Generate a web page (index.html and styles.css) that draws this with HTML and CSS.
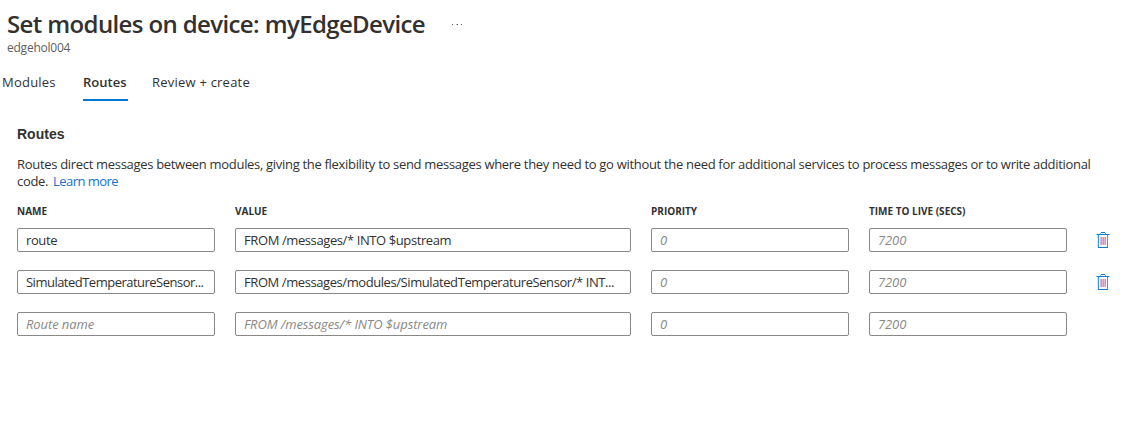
FILE: index.html
```
<!DOCTYPE html>
<html lang="en">
<head>
<meta charset="utf-8">
<title>Set modules on device: myEdgeDevice</title>
<link rel="stylesheet" href="styles.css">
</head>
<body>
<header class="header">
  <div class="title-row">
    <h1 class="title">Set modules on device: myEdgeDevice</h1>
    <svg class="more" width="13" height="3" viewBox="0 0 13 3"><path d="M2 1h1v1H2zM6.500 1H8v1H6.500zM11 1h1v1h-1z"/></svg>
  </div>
  <div class="subtitle">edgehol004</div>
</header>
<nav class="tabs">
  <a class="tab tab-modules">Modules</a>
  <a class="tab tab-active">Routes</a>
  <a class="tab tab-review">Review + create</a>
</nav>
<main class="content">
  <h2 class="heading">Routes</h2>
  <p class="intro">Routes direct messages between modules, giving the flexibility to send messages where they need to go without the need for additional services to process messages or to write additional<br>code. <a class="link">Learn more</a></p>
  <div class="grid labels">
    <div>NAME</div><div>VALUE</div><div>PRIORITY</div><div>TIME TO LIVE (SECS)</div>
  </div>
  <div class="grid row">
    <div class="field">route</div>
    <div class="field">FROM /messages/* INTO $upstream</div>
    <div class="field placeholder">0</div>
    <div class="field placeholder">7200</div>
    <svg class="trash" width="14" height="16" viewBox="0 0 14 16"><use href="#trash"/></svg>
  </div>
  <div class="grid row">
    <div class="field name-long">SimulatedTemperatureSensor...</div>
    <div class="field value-long">FROM /messages/modules/SimulatedTemperatureSensor/* INT...</div>
    <div class="field placeholder">0</div>
    <div class="field placeholder">7200</div>
    <svg class="trash" width="14" height="16" viewBox="0 0 14 16"><use href="#trash"/></svg>
  </div>
  <div class="grid row">
    <div class="field placeholder">Route name</div>
    <div class="field placeholder">FROM /messages/* INTO $upstream</div>
    <div class="field placeholder">0</div>
    <div class="field placeholder">7200</div>
  </div>
</main>
<svg class="symbols" width="0" height="0">
  <symbol id="trash" viewBox="0 0 14 16">
    <path d="M4.500 5v8M6.500 5v8M8.500 5v8" stroke="#e6b8d3"/>
    <path d="M5.500 5v8M7.500 5v8M9.500 5v8" stroke="#7fb2e6"/>
    <path d="M2.500 3v12M11.500 3v12" stroke="#2f9cec"/>
    <path d="M1.500 3v12" stroke="#fbd9e0"/>
    <path d="M.5 2.500h13M5 .5h4M2 15.500h10" stroke="#0f7ad6"/>
    <path d="M4.500 1v1M9.500 1v1" stroke="#5db4f0"/>
  </symbol>
</svg>
</body>
</html>
```
FILE: styles.css
```
*{box-sizing:border-box}
body{margin:0;width:1134px;height:447px;background:#fff;color:#323130;font:13px/17px "Open Sans","Noto Sans",sans-serif;overflow:hidden;white-space:nowrap}
.header{padding:8px 0 0 7px}
.title-row{display:flex;height:32px}
.title{margin:0;width:443px;font-size:24px;line-height:31px;font-weight:600;letter-spacing:-.62px}
.more{margin-top:15px;fill:#605e5c}
.subtitle{font-size:12px;line-height:16px;color:#605e5c;letter-spacing:-.23px}
.tabs{display:flex;padding:15px 0 0 2px}
.tab{height:30px;line-height:22px;letter-spacing:.22px}
.tab-modules{width:81px}
.tab-active{width:45px;font-weight:600;letter-spacing:0;border-bottom:2px solid #0078d4}
.tab-review{margin-left:24px}
.content{padding:24px 0 0 17px}
.heading{margin:0;font:bold 14px/18px "Liberation Sans",sans-serif}
.intro{margin:13px 0 0;letter-spacing:-.31px}
.link{margin-left:1.700px;color:#1570d4;letter-spacing:-.53px}
.grid{display:grid;grid-template-columns:198px 396px 198px 198px 14px;column-gap:20px}
.labels{margin-top:15px;font-size:10px;font-weight:700;line-height:12px}
.row{height:24px;margin-bottom:18px;align-items:center}
.labels + .row{margin-top:11px}
.field{height:24px;border:1px solid #8a8886;border-radius:2px;padding-left:8px;line-height:22px;letter-spacing:-.4px;overflow:hidden}
.name-long{letter-spacing:-.51px}
.value-long{letter-spacing:-.42px}
.placeholder{font-style:italic;color:#8a8886;letter-spacing:-.1px}
.trash{margin-left:9px}
.symbols{display:block}
```
